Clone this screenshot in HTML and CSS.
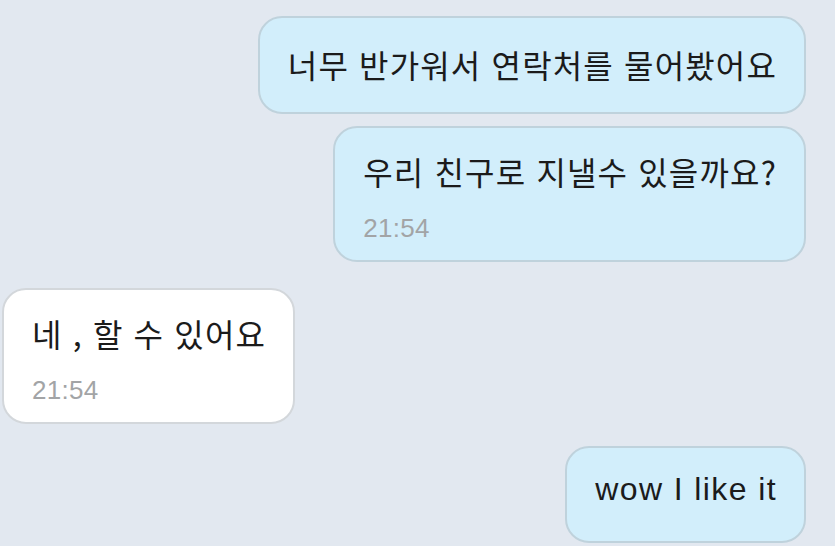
FILE: index.html
```html
<!DOCTYPE html>
<html lang="ko">
<head>
<meta charset="utf-8">
<link rel="stylesheet" href="styles.css">
</head>
<body>
<main class="chat">
  <div class="row row-out first">
    <div class="bubble out single">
      <p class="msg">너무 반가워서 연락처를 물어봤어요</p>
    </div>
  </div>
  <div class="row row-out second">
    <div class="bubble out timed">
      <p class="msg">우리 친구로 지낼수 있을까요?</p>
      <p class="time">21:54</p>
    </div>
  </div>
  <div class="row row-in third">
    <div class="bubble in timed">
      <p class="msg">네 , 할 수 있어요</p>
      <p class="time">21:54</p>
    </div>
  </div>
  <div class="row row-out fourth">
    <div class="bubble out latin">
      <p class="msg">wow I like it</p>
    </div>
  </div>
</main>
</body>
</html>
```

FILE: styles.css
```css
html, body {
  margin: 0;
  padding: 0;
  background: #e2e8f0;
  height: 100%;
  overflow: hidden;
}

.chat {
  display: flex;
  flex-direction: column;
  padding: 16px 29px 0 2px;
  font-family: "Noto Sans CJK KR", "Noto Sans", sans-serif;
  color: #1b1b1b;
}

.row {
  display: flex;
}

.row-out { justify-content: flex-end; }
.row-in { justify-content: flex-start; }

.second { margin-top: 12px; }
.third { margin-top: 26px; }
.fourth { margin-top: 22px; }

.bubble {
  box-sizing: border-box;
  border-radius: 24px;
  border: 2px solid #bfd2dc;
  padding: 0 27px 0 28px;
}

.bubble.out {
  background: #d2eefb;
}

.bubble.in {
  background: #ffffff;
  border-color: #d3d7db;
}

.msg {
  margin: 0;
  font-size: 32px;
  line-height: 42px;
  letter-spacing: 1.15px;
  white-space: nowrap;
}

.single {
  height: 98px;
  padding-top: 25px;
}

.timed {
  height: 136px;
  padding-top: 22px;
}

.latin {
  height: 97px;
  padding-top: 20px;
}

.latin .msg {
  font-family: "Liberation Sans", Arial, sans-serif;
  font-size: 32px;
  letter-spacing: 1.4px;
}

.time {
  margin: 21px 0 0;
  font-family: "Liberation Sans", Arial, sans-serif;
  font-size: 26px;
  line-height: 30px;
  letter-spacing: 0.3px;
  color: #a2a4a6;
}
```
